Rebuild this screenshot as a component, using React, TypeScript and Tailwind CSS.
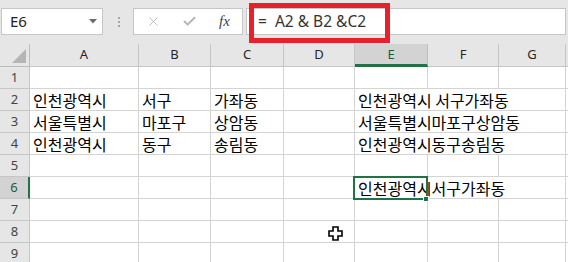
import React from 'react';
import { X, Check } from 'lucide-react';

const cellText: Record<number, string[]> = {
  2: ['인천광역시', '서구', '가좌동', '', '인천광역시 서구가좌동'],
  3: ['서울특별시', '마포구', '상암동', '', '서울특별시마포구상암동'],
  4: ['인천광역시', '동구', '송림동', '', '인천광역시동구송림동'],
  6: ['', '', '', '', '인천광역시서구가좌동'],
};

// rows where E spills over F and G
const spillRows = [2, 3, 4, 6];

const letters = ['A', 'B', 'C', 'D', 'E', 'F', 'G'];

const Toolbar: React.FC = () => (
  <div className="relative flex h-[44px] items-start bg-[#e6e6e6] pt-[8px]">
    <div className="ml-[1px] flex h-[27px] w-[102px] items-center justify-between border border-[#c6c6c6] bg-white pl-[8px] pr-[5px]">
      <span className="text-[15px] text-[#222]">E6</span>
      <svg width="8" height="5" viewBox="0 0 8 5">
        <polygon points="0,0 8,0 4,4.5" fill="#6b6b6b" />
      </svg>
    </div>
    <div className="ml-[15px] mt-[9px] flex flex-col gap-[2px]">
      <span className="h-[2px] w-[2px] bg-[#a6a6a6]" />
      <span className="h-[2px] w-[2px] bg-[#a6a6a6]" />
      <span className="h-[2px] w-[2px] bg-[#a6a6a6]" />
    </div>
    <div className="ml-[13px] flex h-[27px] w-[110px] items-center border border-[#c6c6c6] bg-white">
      <X size={15} strokeWidth={1.4} className="ml-[12px] text-[#b3b3b3]" />
      <Check size={15} strokeWidth={3} className="ml-[21px] text-[#b3b3b3]" />
      <span className="ml-[22px] font-['Liberation_Serif',serif] text-[15px] italic text-[#444]">fx</span>
    </div>
    <div className="ml-[3px] flex h-[27px] w-[320px] items-center border border-[#c6c6c6] bg-white pl-[11px]">
      <span className="whitespace-pre text-[15.5px] text-[#333]">{'=  A2 & B2 &C2'}</span>
    </div>
    <div className="absolute left-[249px] top-[3px] h-[40px] w-[141px] border-[5px] border-[#e8202a]" />
  </div>
);

const App: React.FC = () => {
  const rows = [1, 2, 3, 4, 5, 6, 7, 8, 9];

  return (
    <div className="relative h-[262px] w-[568px] overflow-hidden bg-white font-['Noto_Sans','Noto_Sans_CJK_KR',sans-serif]">
      <Toolbar />

      <div className="grid grid-cols-[30px_109px_72px_73px_71px_73px_71px_67px_1fr]">
        {/* column header row */}
        <div className="relative h-[23px] border-b border-r border-[#bdbdbd] bg-[#e6e6e6]">
          <svg width="14" height="14" viewBox="0 0 14 14" className="absolute bottom-[3px] right-[3px]">
            <polygon points="14,0 14,14 0,14" fill="#b5b5b5" />
          </svg>
        </div>
        {letters.map((l) =>
          l === 'E' ? (
            <div
              key={l}
              className="flex h-[23px] items-center justify-center border-b-[3px] border-r border-b-[#217346] border-r-[#bdbdbd] bg-[#d3d3d3] pt-[2px] text-[13px] text-[#1f5a38]"
            >
              {l}
            </div>
          ) : (
            <div
              key={l}
              className="flex h-[23px] items-center justify-center border-b border-r border-[#c6c6c6] bg-[#e6e6e6] text-[13px] text-[#262626]"
            >
              {l}
            </div>
          )
        )}
        <div className="h-[23px] border-b border-[#c6c6c6] bg-[#e6e6e6]" />

        {rows.map((r) => {
          const data = cellText[r] || [];
          const spill = spillRows.includes(r);
          const active = r === 6;
          return (
            <React.Fragment key={r}>
              <div
                className={
                  active
                    ? 'flex h-[22px] items-center justify-center border-b border-r-2 border-b-[#c6c6c6] border-r-[#217346] bg-[#d3d3d3] text-[13px] text-[#1f5a38]'
                    : 'flex h-[22px] items-center justify-center border-b border-r border-[#c6c6c6] bg-[#e6e6e6] text-[13px] text-[#444]'
                }
              >
                {r}
              </div>
              {letters.map((l, i) => {
                const noRight = spill && (l === 'E' || l === 'F');
                return (
                  <div
                    key={l}
                    className={
                      (noRight ? 'border-b ' : 'border-b border-r ') +
                      "relative flex h-[22px] items-center whitespace-nowrap border-[#d4d4d4] pl-[3px] font-['Noto_Sans_CJK_KR',sans-serif] text-[16px] leading-none text-black"
                    }
                  >
                    <span className="relative">{data[i] || ''}</span>
                    {active && l === 'E' && (
                      <>
                        <div className="absolute left-[-2px] top-[-1px] z-10 h-[24px] w-[75px] border-2 border-[#217346]" />
                        <div className="absolute left-[68px] top-[19px] z-20 h-[6px] w-[6px] border border-white bg-[#217346]" />
                      </>
                    )}
                  </div>
                );
              })}
              <div className="h-[22px] border-b border-[#d4d4d4]" />
            </React.Fragment>
          );
        })}
      </div>

      {/* mouse cursor */}
      <svg width="16" height="16" viewBox="0 0 16 16" className="absolute left-[328px] top-[226px] z-30">
        <path d="M5 1 H10 V5 H14 V10 H10 V14 H5 V10 H1 V5 H5 Z" fill="white" stroke="black" strokeWidth="1.6" />
      </svg>
    </div>
  );
};

export default App;
